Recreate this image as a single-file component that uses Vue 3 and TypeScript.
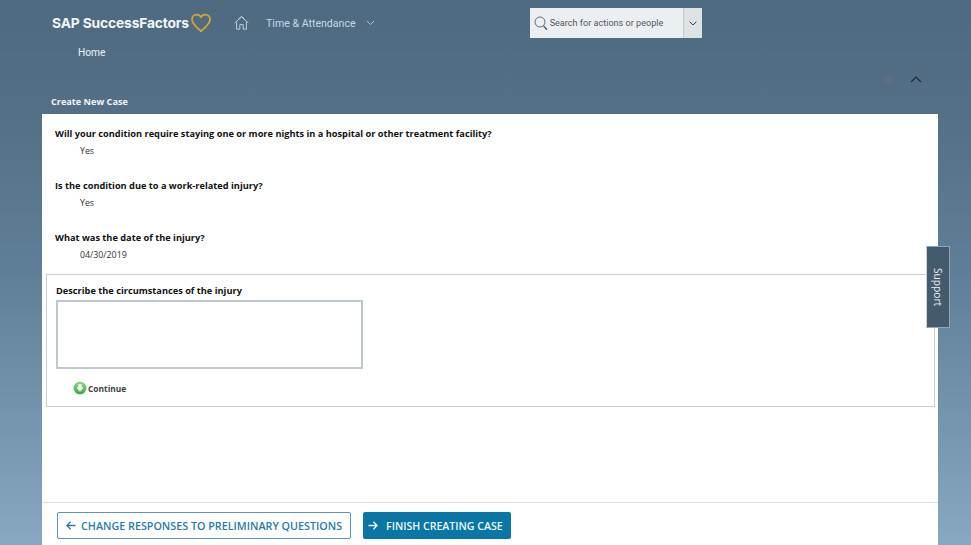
<script setup lang="ts">
interface Answer { q: string; a: string }
const answers: Answer[] = [
  { q: 'Will your condition require staying one or more nights in a hospital or other treatment facility?', a: 'Yes' },
  { q: 'Is the condition due to a work-related injury?', a: 'Yes' },
  { q: 'What was the date of the injury?', a: '04/30/2019' },
]
</script>

<template>
  <div class="page">
    <header class="top">
      <div class="brand">
        <span class="logo">SAP SuccessFactors</span>
        <svg class="heart" width="22" height="20" viewBox="0 0 22 20" fill="none">
          <path d="M11 18.3 C7.5 15 2 11.2 2 6.6 C2 3.6 4.2 1.6 6.8 1.6 C8.6 1.6 10.2 2.6 11 4.2 C11.8 2.6 13.4 1.6 15.2 1.6 C17.8 1.6 20 3.6 20 6.6 C20 11.2 14.5 15 11 18.3 Z" stroke="#d6a52e" stroke-width="1.8" stroke-linejoin="round" />
        </svg>
      </div>
      <svg class="home" width="15" height="14" viewBox="0 0 15 14" fill="none" stroke="#c4d8e8" stroke-width="0.9">
        <path d="M0.7 6.8 L7.5 1 L14.3 6.8" />
        <path d="M2.6 6 V13.2 H5.8 V8.6 H9.2 V13.2 H12.4 V6" />
        <path d="M4.4 3.2 L7.5 0.3 L10.6 3.2" />
      </svg>
      <span class="module">Time &amp; Attendance</span>
      <svg class="mod-chevron" width="9" height="6" viewBox="0 0 9 6" fill="none" stroke="#b3c9da" stroke-width="0.9">
        <path d="M1 1 L4.5 4.6 L8 1" />
      </svg>
      <div class="search">
        <div class="search-field">
          <svg width="14" height="15" viewBox="0 0 14 15" fill="none" stroke="#555f66" stroke-width="0.9">
            <circle cx="6" cy="6" r="5" />
            <path d="M9.6 10 L13 13.8" stroke-width="1.5" />
          </svg>
          <span>Search for actions or people</span>
        </div>
        <div class="search-btn">
          <svg width="8" height="5" viewBox="0 0 8 5" fill="none" stroke="#333d44" stroke-width="1">
            <path d="M0.6 0.6 L4 4 L7.4 0.6" />
          </svg>
        </div>
      </div>
    </header>

    <div class="crumb">Home</div>

    <div class="tools">
      <span class="faint-dot"></span>
      <svg width="12" height="7" viewBox="0 0 12 7" fill="none" stroke="#1f2c36" stroke-width="1.2">
        <path d="M1 6 L6 1 L11 6" />
      </svg>
    </div>

    <h1 class="title">Create New Case</h1>

    <main class="card">
      <div class="answers">
        <section v-for="item in answers" :key="item.q" class="answer">
          <div class="question">{{ item.q }}</div>
          <div class="value">{{ item.a }}</div>
        </section>
      </div>

      <section class="describe">
        <label class="describe-label" for="circumstances">Describe the circumstances of the injury</label>
        <textarea id="circumstances" class="describe-input"></textarea>
        <div class="continue">
          <svg width="14" height="14" viewBox="0 0 14 14">
            <defs>
              <linearGradient id="greenBall" x1="0" y1="0" x2="0" y2="1">
                <stop offset="0" stop-color="#9ad88a" />
                <stop offset="1" stop-color="#3da64a" />
              </linearGradient>
            </defs>
            <circle cx="7" cy="7" r="6.5" fill="url(#greenBall)" />
            <path d="M5.4 3.2 H8.6 V6.6 H10.6 L7 10.8 L3.4 6.6 H5.4 Z" fill="#fff" />
          </svg>
          <span>Continue</span>
        </div>
      </section>

      <div class="spacer"></div>

      <footer class="actions">
        <button type="button" class="btn btn-outline">
          <svg width="10" height="9" viewBox="0 0 10 9" fill="none" stroke="currentColor" stroke-width="1.3">
            <path d="M9.5 4.5 H1 M4.6 0.8 L0.9 4.5 L4.6 8.2" />
          </svg>
          CHANGE RESPONSES TO PRELIMINARY QUESTIONS
        </button>
        <button type="button" class="btn btn-solid">
          <svg width="10" height="9" viewBox="0 0 10 9" fill="none" stroke="currentColor" stroke-width="1.3">
            <path d="M0.5 4.5 H9 M5.4 0.8 L9.1 4.5 L5.4 8.2" />
          </svg>
          FINISH CREATING CASE
        </button>
      </footer>
    </main>

    <div class="support"><span>Support</span></div>
  </div>
</template>

<style>
html, body { margin: 0; padding: 0; overflow: hidden; }
</style>

<style scoped>
.page {
  position: relative;
  width: 971px;
  height: 545px;
  overflow: hidden;
  display: flex;
  flex-direction: column;
  background: linear-gradient(180deg, #4e6a80 0%, #547086 22%, #5f7f98 50%, #87a8c0 100%);
  font-family: "Open Sans", "Liberation Sans", sans-serif;
}
.top {
  display: flex;
  align-items: center;
  height: 46px;
  padding-left: 52px;
  box-sizing: border-box;
}
.brand { display: flex; align-items: center; width: 182px; }
.logo {
  font-family: Inter, "Liberation Sans", Arial, sans-serif;
  font-weight: 700;
  font-size: 13.8px;
  letter-spacing: -0.15px;
  color: #f2f6f9;
}
.heart { margin-left: 1px; }
.home { margin-right: 17px; }
.module {
  font-family: Roboto, "Liberation Sans", sans-serif;
  font-size: 10.6px;
  color: #c4d8e8;
  margin-right: 10px;
}
.search {
  display: flex;
  width: 172px;
  height: 30px;
  margin-left: 155px;
  background: #eceff1;
}
.search-field {
  flex: 1;
  display: flex;
  align-items: center;
  gap: 2px;
  padding-left: 4px;
  font-family: Roboto, "Liberation Sans", sans-serif;
  font-size: 9.1px;
  color: #50595f;
}
.search-btn {
  width: 18px;
  display: flex;
  align-items: center;
  justify-content: center;
  background: #dde2e5;
  border-left: 1px solid #c3c9cd;
}
.crumb {
  padding-left: 78px;
  font-family: Roboto, "Liberation Sans", sans-serif;
  font-size: 10.2px;
  line-height: 13px;
  color: #eef3f7;
}
.tools {
  display: flex;
  justify-content: flex-end;
  align-items: center;
  gap: 17px;
  padding-right: 49px;
  margin-top: 14px;
  height: 12px;
}
.faint-dot {
  width: 9px;
  height: 9px;
  border-radius: 50%;
  background: #5c6f84;
}
.title {
  margin: 11px 0 0;
  padding-left: 51px;
  font-size: 9.15px;
  line-height: 12px;
  font-weight: 700;
  color: #f2f5f8;
}
.card {
  flex: 1;
  margin: 6px 33px 0 42px;
  background: #fff;
  display: flex;
  flex-direction: column;
  min-height: 0;
}
.answers { padding: 14px 0 0 13px; }
.answer { height: 52px; }
.question {
  font-size: 9.22px;
  line-height: 12px;
  font-weight: 700;
  color: #111;
}
.value {
  padding: 5px 0 0 25px;
  font-size: 8.8px;
  line-height: 12px;
  color: #333;
}
.describe {
  margin: -10px 3px 0 4px;
  height: 133px;
  box-sizing: border-box;
  border: 1px solid #c9cdd2;
  padding: 10px 0 0 9px;
}
.describe-label {
  display: block;
  font-size: 9.22px;
  line-height: 12px;
  font-weight: 700;
  color: #111;
}
.describe-input {
  display: block;
  width: 307px;
  height: 69px;
  margin: 3px 0 0;
  padding: 0;
  box-sizing: border-box;
  border: 2px solid #bcc7d0;
  background: #fff;
  resize: none;
  outline: none;
}
.continue {
  display: flex;
  align-items: center;
  gap: 1px;
  margin: 12px 0 0 17px;
  font-size: 8.4px;
  font-weight: 700;
  color: #3a3f44;
}
.spacer { flex: 1; }
.actions {
  display: flex;
  align-items: flex-start;
  gap: 12px;
  height: 43px;
  box-sizing: border-box;
  padding: 9px 0 0 15px;
  border-top: 1px solid #dcdfe3;
}
.btn {
  display: flex;
  align-items: center;
  height: 27px;
  box-sizing: border-box;
  border-radius: 2px;
  font-family: "Open Sans", "Liberation Sans", sans-serif;
  font-weight: 600;
  white-space: nowrap;
  cursor: pointer;
}
.btn-outline {
  width: 294px;
  padding: 0 0 0 8px;
  gap: 5px;
  font-size: 10.75px;
  color: #2a7ba6;
  background: #fff;
  border: 1px solid #5d95b4;
}
.btn-solid {
  width: 148px;
  padding: 0 0 0 5px;
  gap: 8px;
  font-size: 10.6px;
  color: #eef6fa;
  background: #0a76a6;
  border: 0;
}
.support {
  position: absolute;
  left: 926px;
  top: 246px;
  width: 24px;
  height: 82px;
  box-sizing: border-box;
  display: flex;
  align-items: center;
  justify-content: center;
  background: #445a6d;
  border: 1px solid #8fa5b6;
  border-left-color: #c9d2da;
}
.support span {
  writing-mode: vertical-rl;
  font-size: 10.2px;
  color: #e8eef3;
}
</style>
